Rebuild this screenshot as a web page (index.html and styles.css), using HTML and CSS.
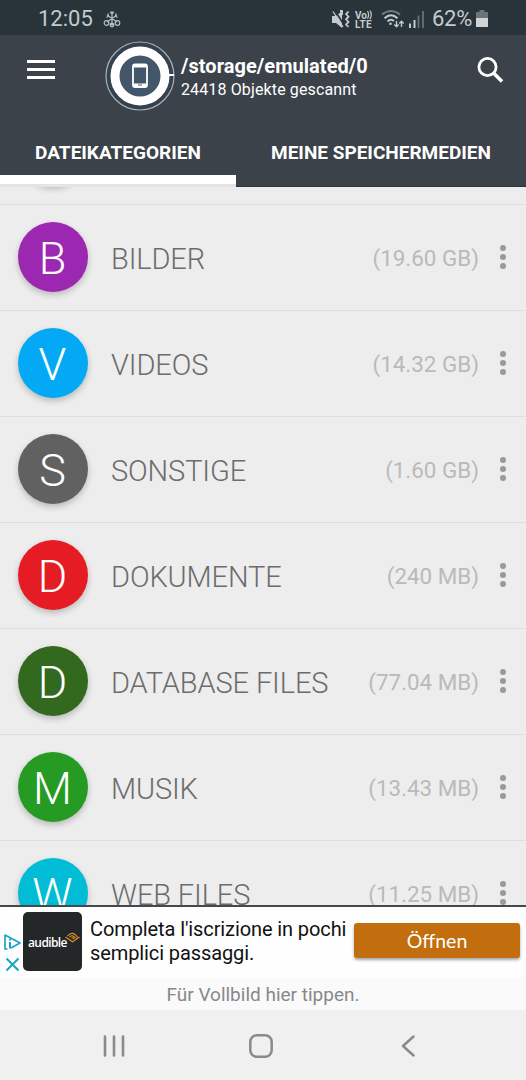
FILE: index.html
```html
<!DOCTYPE html>
<html lang="de">
<head>
<meta charset="UTF-8">
<meta name="viewport" content="width=device-width, initial-scale=1.0">
<title>Dateikategorien</title>
<link rel="stylesheet" href="styles.css">
</head>
<body>
<div class="screen">
    <div class="statusbar">
        <span class="clock">12:05</span>
        <svg class="snow" width="18" height="18" viewBox="0 0 18 18" fill="none" stroke="#b5bcbf" stroke-width="1.2">
            <path d="M9 1v15M4 5l10 7M14 5L4 12M7 2l2 2 2-2M3.500 7.500l2-1.500-.5-2.500M14.500 7.500l-2-1.500.5-2.500M7 15l2-2 2 2"/>
            <circle cx="3.5" cy="13" r="2.3"/><circle cx="14.5" cy="13" r="2.3"/><circle cx="9" cy="15" r="1.8"/>
        </svg>
        <svg class="icons" width="96" height="24" viewBox="328 6 96 24">
            <!-- mute + vibrate -->
            <path d="M332 15h4l6-5v17l-6-5h-4z" fill="#c5cacc"/>
            <path d="M334.500 9l9 14" stroke="#29333a" stroke-width="1.600"/>
            <path d="M333 10.500l10 15.500" stroke="#c5cacc" stroke-width="1.300"/>
            <path d="M348.500 10.500l-2.400 2.600 2.400 2.600-2.400 2.600 2.400 2.600-2.400 2.600 2.400 2.500M340 10h2v4" fill="none" stroke="#c5cacc" stroke-width="1.800"/>
            <!-- volte -->
            <text x="355" y="17.500" class="volte" textLength="12">Vo</text>
            <path d="M367.500 10q2.200 3.800 0 7.600M370 9.500q2.500 4.300 0 8.600" fill="none" stroke="#c5cacc" stroke-width="1.200"/>
            <text x="355" y="27" class="volte" textLength="16.500">LTE</text>
            <!-- wifi -->
            <g fill="none" stroke="#c5cacc" stroke-width="2">
                <path d="M382 13.500q9-7 18 0" stroke="#707a7f"/>
                <path d="M384.500 17.300q6.500-6 13 0M387.500 20.400q3.500-3 6.500-.3"/>
            </g>
            <circle cx="390.500" cy="22.700" r="1.300" fill="#c5cacc"/>
            <path d="M396.500 20v5.500M394.300 23.500l2.200 2.300 2.200-2.300M401.500 26v-5.500M399.300 22.500l2.200-2.300 2.200 2.300" fill="none" stroke="#c5cacc" stroke-width="1.400"/>
            <!-- mobile signal -->
            <path d="M410 27v-4.500M414.500 27v-8" stroke="#c5cacc" stroke-width="2"/>
            <path d="M418.500 27V14.500M423 27V10" stroke="#667076" stroke-width="1.800"/>
        </svg>
        <span class="percent">62%</span>
        <svg class="battery" width="12" height="18" viewBox="0 0 12 18">
            <path d="M3.500 0h5v2H12v6H0V2h3.500z" fill="#6b7479"/>
            <path d="M0 8h12v8.500q0 .5-.5.500h-11q-.5 0-.5-.5z" fill="#d0d4d6"/>
        </svg>
    </div>

    <div class="header">
        <div class="toolbar">
            <svg class="menu" width="28" height="19" viewBox="0 0 28 19">
                <path d="M0 1.500h28M0 9.500h28M0 17.500h28" stroke="#fff" stroke-width="2.800"/>
            </svg>
            <svg class="ring" width="70" height="70" viewBox="0 0 70 70">
                <circle cx="35" cy="35" r="34" fill="#35424d" stroke="#a4b4bf" stroke-width="1.200"/>
                <circle cx="35" cy="35" r="25" fill="#43566a" stroke="#fff" stroke-width="9"/>
                <path d="M64 34h5" stroke="#fff" stroke-width="2"/>
                <rect x="28" y="23.500" width="14" height="22.500" rx="2" fill="none" stroke="#fff" stroke-width="1.800"/>
                <path d="M28.500 25h13M28.500 44h13" stroke="#fff" stroke-width="3"/>
                <path d="M33 44h4" stroke="#43566a" stroke-width="1"/>
            </svg>
            <div class="storage">
                <div class="path">/storage/emulated/0</div>
                <div class="scanned">24418 Objekte gescannt</div>
            </div>
            <svg class="search" width="28" height="28" viewBox="0 0 28 28" fill="none" stroke="#fff">
                <circle cx="11.500" cy="11" r="8.600" stroke-width="2.800"/>
                <path d="M17.500 17l8.500 8.500" stroke-width="3.600"/>
            </svg>
        </div>
        <div class="tabs">
            <div class="tab active"><span>DATEIKATEGORIEN</span></div>
            <div class="tab"><span>MEINE SPEICHERMEDIEN</span></div>
        </div>
    </div>

    <div class="list">
        <div class="row first"><div class="avatar"></div></div>
        <div class="row">
            <div class="avatar purple">B</div><div class="name">BILDER</div><div class="size">(19.60 GB)</div>
            <div class="dots"><i></i><i></i><i></i></div>
        </div>
        <div class="row">
            <div class="avatar blue">V</div><div class="name">VIDEOS</div><div class="size">(14.32 GB)</div>
            <div class="dots"><i></i><i></i><i></i></div>
        </div>
        <div class="row">
            <div class="avatar grey">S</div><div class="name">SONSTIGE</div><div class="size">(1.60 GB)</div>
            <div class="dots"><i></i><i></i><i></i></div>
        </div>
        <div class="row">
            <div class="avatar red">D</div><div class="name">DOKUMENTE</div><div class="size">(240 MB)</div>
            <div class="dots"><i></i><i></i><i></i></div>
        </div>
        <div class="row">
            <div class="avatar darkgreen">D</div><div class="name">DATABASE FILES</div><div class="size">(77.04 MB)</div>
            <div class="dots"><i></i><i></i><i></i></div>
        </div>
        <div class="row">
            <div class="avatar green">M</div><div class="name">MUSIK</div><div class="size">(13.43 MB)</div>
            <div class="dots"><i></i><i></i><i></i></div>
        </div>
        <div class="row">
            <div class="avatar cyan">W</div><div class="name">WEB FILES</div><div class="size">(11.25 MB)</div>
            <div class="dots"><i></i><i></i><i></i></div>
        </div>
    </div>

    <div class="ad">
        <svg class="adchoices" width="17" height="42" viewBox="0 0 17 42" fill="none" stroke="#18a5c6" stroke-width="1.700" stroke-linejoin="round">
            <path d="M3.500 17H1V3l15 8-9 5"/>
            <path d="M6 10v6.500M6 6.700v1.800" stroke-width="2"/>
            <path d="M2.500 26.500l12 12M14.500 26.500l-12 12" stroke-width="2"/>
        </svg>
        <div class="logo">
            <span>audible</span>
            <svg width="15" height="11" viewBox="0 0 15 11" fill="none" stroke="#e08f2c" stroke-width="1.200">
                <path d="M.5 5l7 4.700 7-4.700M2.500 3.800q5.500-5.500 10 1.500M4.500 5q3.500-3 6 1.300M6.500 6.200q1.500-1 2.500.8"/>
            </svg>
        </div>
        <div class="adtext">Completa l'iscrizione in pochi<br>semplici passaggi.</div>
        <div class="open">Öffnen</div>
    </div>
    <div class="hint"><span>Für Vollbild hier tippen.</span></div>

    <div class="navbar">
        <svg width="24" height="24" viewBox="0 0 24 24" stroke="#8a8a8a" stroke-width="2.600" stroke-linecap="round">
            <path d="M3 2.500v19M12 2.500v19M21 2.500v19"/>
        </svg>
        <svg width="24" height="24" viewBox="0 0 24 24" fill="none" stroke="#8a8a8a" stroke-width="2.500">
            <rect x="1.300" y="1.300" width="21.400" height="21.400" rx="6.500"/>
        </svg>
        <svg width="24" height="24" viewBox="0 0 24 24" fill="none" stroke="#8a8a8a" stroke-width="2.500" stroke-linecap="round" stroke-linejoin="round">
            <path d="M18.500 2.500L8 12l10.500 9.500"/>
        </svg>
    </div>
</div>
</body>
</html>
```
FILE: styles.css
```css
*{
    box-sizing: border-box;
}
body{
    margin: 0;
    font-family: Roboto, "Noto Sans", sans-serif;
}
svg{
    display: block;
    flex: none;
}
.screen{
    width: 526px;
    height: 1080px;
    display: flex;
    flex-direction: column;
    overflow: hidden;
    background: #ededed;
    white-space: nowrap;
}

/* status bar */
.statusbar{
    height: 35px;
    flex: none;
    display: flex;
    align-items: center;
    padding: 2px 38px 0 38px;
    background: #29333a;
    color: #c5cacc;
}
.clock{
    font-size: 22px;
    width: 65px;
}
.icons{
    margin-left: auto;
    overflow: visible;
}
.volte{
    font-size: 10px;
    font-weight: 700;
    fill: #c5cacc;
}
.percent{
    margin-left: 8px;
    width: 44px;
    font-size: 22px;
    letter-spacing: -0.300px;
}

/* header */
.header{
    height: 152px;
    flex: none;
    background: #3b4249;
    color: #fff;
}
.toolbar{
    height: 82px;
    display: flex;
    align-items: center;
    padding: 0 22px 0 27px;
}
.menu{
    margin-bottom: 14px;
}
.ring{
    margin-left: 50px;
}
.storage{
    flex: 1;
    margin-left: 6px;
    padding-top: 4px;
}
.path{
    font-size: 20px;
    line-height: 24px;
    font-weight: 700;
    letter-spacing: 0.050px;
}
.scanned{
    font-size: 16px;
    line-height: 24px;
    letter-spacing: 0.130px;
}
.search{
    margin-bottom: 12px;
}
.tabs{
    height: 70px;
    display: flex;
}
.tab{
    flex: 1;
    display: flex;
    justify-content: center;
    padding-top: 24px;
    font-size: 19px;
    line-height: 24px;
    font-weight: 700;
    border-bottom: 1px solid #2f343a;
}
.tab.active{
    flex: none;
    width: 236px;
    border-bottom: 3px solid #e4e4e4;
    box-shadow: inset 0 -9px #fff;
}

/* category list */
.list{
    height: 718px;
    flex: none;
    overflow: hidden;
}
.row{
    height: 106px;
    display: flex;
    align-items: center;
    padding: 0 16px 0 17.500px;
    border-bottom: 1px solid #dedede;
}
.row.first{
    margin-top: -88px;
}
.avatar{
    width: 70px;
    height: 70px;
    margin-bottom: 1px;
    border-radius: 50%;
    color: #fff;
    font-size: 45px;
    font-weight: 300;
    line-height: 74px;
    text-align: center;
    box-shadow: 0 3px 6px rgba(0,0,0,.22);
}
.purple{ background: #9c27b0; }
.blue{ background: #03a9f4; }
.grey{ background: #616161; }
.red{ background: #e51c23; }
.darkgreen{ background: #33691e; }
.green{ background: #259b24; }
.cyan{ background: #00bcd4; }
.name{
    flex: 1;
    margin-left: 23.500px;
    padding-top: 3px;
    font-size: 29px;
    font-weight: 300;
    letter-spacing: -0.120px;
    color: #6c6c6c;
}
.size{
    padding-top: 1px;
    font-size: 22.400px;
    color: #bababa;
}
.dots{
    width: 31px;
    display: flex;
    flex-direction: column;
    align-items: flex-end;
    gap: 3px;
    padding-right: 4.500px;
    margin-top: -1px;
}
.dots i{
    width: 6px;
    height: 6px;
    border-radius: 50%;
    background: #999;
}

/* ad banner */
.ad{
    height: 72px;
    flex: none;
    display: flex;
    align-items: center;
    background: #fefefe;
    border-top: 2px solid #43494e;
    padding: 0 6px 3px 4px;
}
.adchoices{
    margin-top: 25px;
}
.logo{
    width: 59px;
    height: 59px;
    margin-left: 2px;
    margin-top: 1px;
    padding-left: 5px;
    border-radius: 5px;
    background: #232728;
    color: #fff;
    display: flex;
    align-items: center;
}
.logo span{
    width: 37px;
    font: 600 12px/16px "Open Sans", sans-serif;
    letter-spacing: -0.600px;
    padding-top: 3px;
}
.logo svg{
    margin-bottom: 8px;
}
.adtext{
    flex: 1;
    margin-left: 8px;
    padding-top: 1px;
    font-size: 20px;
    line-height: 24.500px;
    letter-spacing: -0.100px;
    color: #111;
}
.open{
    width: 166px;
    height: 35px;
    border-radius: 3px;
    background: #c26e0e;
    color: #fff;
    font-family: Lato, sans-serif;
    font-size: 19.500px;
    line-height: 35px;
    text-align: center;
    box-shadow: 0 2px 3px rgba(0,0,0,.35);
}
.hint{
    height: 33px;
    flex: none;
    background: #fafafa;
    color: #888;
    font-size: 19px;
    line-height: 35px;
    text-align: center;
}

/* navigation buttons */
.navbar{
    height: 70px;
    flex: none;
    display: flex;
    align-items: center;
    justify-content: space-between;
    padding: 1px 107px 0 102px;
    background: #f0f0f0;
}
```
